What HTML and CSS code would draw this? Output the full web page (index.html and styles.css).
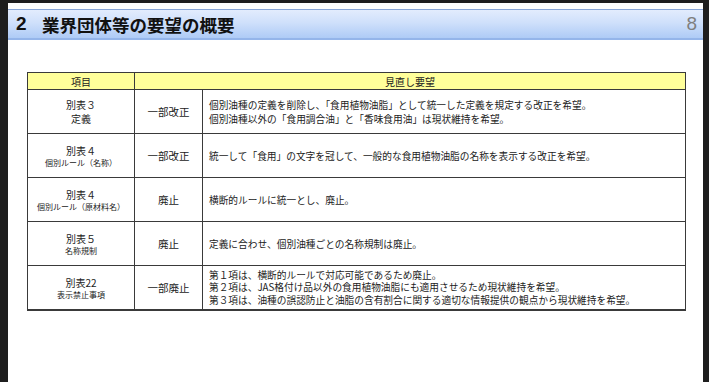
FILE: index.html
```html
<!DOCTYPE html>
<html lang="ja">
<head>
<meta charset="utf-8">
<title>業界団体等の要望の概要</title>
<link rel="stylesheet" href="styles.css">
</head>
<body>
<div class="page">
  <div class="titlebar">
    <h1 class="title"><span class="num">2</span>業界団体等の要望の概要</h1>
    <span class="pageno">8</span>
  </div>
  <table class="req">
    <colgroup>
      <col class="c1"><col class="c2"><col class="c3">
    </colgroup>
    <thead>
      <tr><th>項目</th><th colspan="2">見直し要望</th></tr>
    </thead>
    <tbody>
      <tr>
        <td class="item"><span class="main">別表３</span><span class="sub big">定義</span></td>
        <td class="kind">一部改正</td>
        <td class="desc">個別油種の定義を削除し、「食用植物油脂」として統一した定義を規定する改正を希望。<br>個別油種以外の「食用調合油」と「香味食用油」は現状維持を希望。</td>
      </tr>
      <tr>
        <td class="item"><span class="main">別表４</span><span class="sub">個別ルール（名称）</span></td>
        <td class="kind">一部改正</td>
        <td class="desc">統一して「食用」の文字を冠して、一般的な食用植物油脂の名称を表示する改正を希望。</td>
      </tr>
      <tr>
        <td class="item"><span class="main">別表４</span><span class="sub">個別ルール（原材料名）</span></td>
        <td class="kind">廃止</td>
        <td class="desc">横断的ルールに統一とし、廃止。</td>
      </tr>
      <tr>
        <td class="item"><span class="main">別表５</span><span class="sub">名称規制</span></td>
        <td class="kind">廃止</td>
        <td class="desc">定義に合わせ、個別油種ごとの名称規制は廃止。</td>
      </tr>
      <tr>
        <td class="item"><span class="main">別表22</span><span class="sub">表示禁止事項</span></td>
        <td class="kind">一部廃止</td>
        <td class="desc tight">第１項は、横断的ルールで対応可能であるため廃止。<br>第２項は、JAS格付け品以外の食用植物油脂にも適用させるため現状維持を希望。<br>第３項は、油種の誤認防止と油脂の含有割合に関する適切な情報提供の観点から現状維持を希望。</td>
      </tr>
    </tbody>
  </table>
</div>
</body>
</html>
```

FILE: styles.css
```css
html, body {
  margin: 0;
  padding: 0;
}
body {
  background: #1e1e1e;
  width: 709px;
  height: 382px;
  overflow: hidden;
  font-family: "Noto Sans CJK JP", "Noto Sans", sans-serif;
  color: #1e1e1e;
}
.page {
  margin: 3px 6px 0 8px;
  height: 379px;
  background: #ffffff;
  padding-top: 6px;
  box-sizing: border-box;
}
.titlebar {
  height: 31px;
  box-sizing: border-box;
  border-top: 1px solid #88a6d8;
  border-bottom: 2px solid #94b5ea;
  background: linear-gradient(to bottom, #e2ecfd 0%, #cfe0fb 45%, #aecbf6 100%);
  display: flex;
  align-items: center;
  justify-content: space-between;
  padding: 0 6px 0 8px;
}
.title {
  margin: 0;
  font-size: 17.5px;
  font-weight: bold;
  color: #111;
  letter-spacing: 0;
  display: flex;
  align-items: center;
}
.num {
  font-family: "Liberation Sans", "DejaVu Sans", sans-serif;
  font-size: 19px;
  font-weight: bold;
  width: 26px;
}
.pageno {
  font-family: "Liberation Sans", "DejaVu Sans", sans-serif;
  font-size: 19px;
  color: #7f7f7f;
}
.req {
  margin: 32px 0 0 19px;
  border-collapse: collapse;
  width: 658px;
  table-layout: fixed;
  font-size: 9.7px;
  color: #222;
}
.c1 { width: 107px; }
.c2 { width: 68px; }
.c3 { width: 483px; }
.req th, .req td {
  border: 1px solid #3a3a3a;
  padding: 0;
}
.req th {
  background: #ffff9a;
  font-weight: normal;
  height: 16px;
  font-size: 10px;
  line-height: 15px;
  text-align: center;
}
.req tbody td {
  height: 43px;
  vertical-align: middle;
}
.req tbody tr:last-child td {
  border-bottom-width: 2px;
}
.item {
  text-align: center;
}
.main, .sub {
  display: block;
}
.main {
  font-size: 10px;
  line-height: 13px;
}
.sub {
  font-size: 8px;
  line-height: 11px;
}
.sub.big {
  font-size: 10px;
  line-height: 15px;
}
.kind {
  text-align: center;
  font-size: 10.5px;
}
.desc {
  padding-left: 6px !important;
  line-height: 14px;
  white-space: nowrap;
}
.desc.tight {
  line-height: 12.5px;
}
```
